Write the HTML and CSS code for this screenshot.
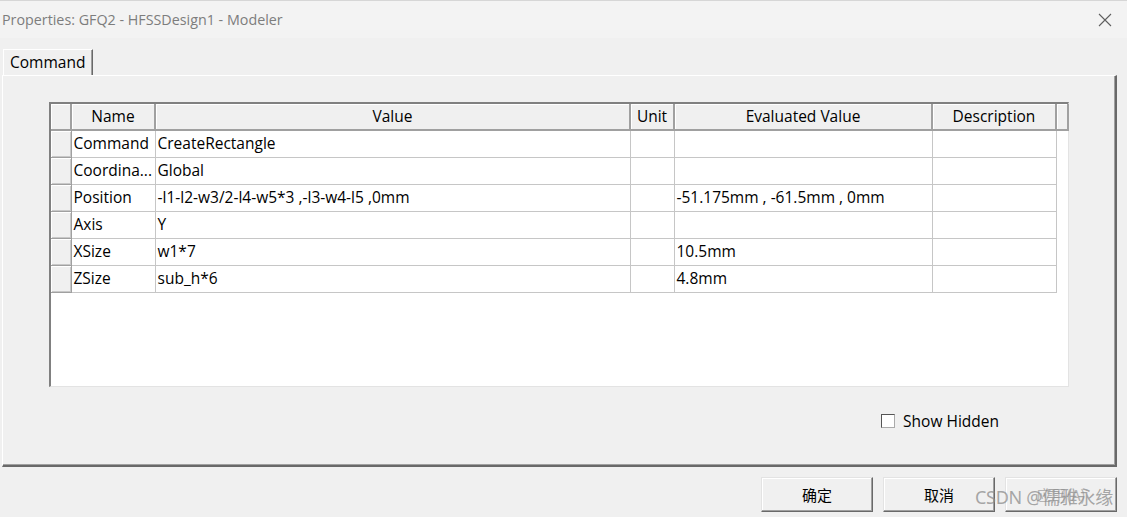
FILE: index.html
```html
<!DOCTYPE html>
<html lang="en">
<head>
    <meta charset="UTF-8">
    <link rel="stylesheet" href="styles.css">
</head>
<body>

<div class="dialog">
    <div class="titlebar">
        <div class="title">Properties: GFQ2 - HFSSDesign1 - Modeler</div>
        <svg class="close" width="14" height="14" viewBox="0 0 14 14">
            <path d="M1 1 L13 13 M13 1 L1 13" stroke="#5f5f5f" stroke-width="1.1" fill="none"/>
        </svg>
    </div>

    <div class="tabs">
        <div class="tab">Command</div>
    </div>

    <div class="panel">
        <div class="grid">
            <table>
                <colgroup>
                    <col class="c-sel">
                    <col class="c-name">
                    <col class="c-value">
                    <col class="c-unit">
                    <col class="c-eval">
                    <col class="c-desc">
                    <col class="c-end">
                </colgroup>
                <thead>
                    <tr>
                        <th></th>
                        <th>Name</th>
                        <th>Value</th>
                        <th>Unit</th>
                        <th>Evaluated Value</th>
                        <th>Description</th>
                        <th></th>
                    </tr>
                </thead>
                <tbody>
                    <tr>
                        <td class="sel"></td><td>Command</td><td>CreateRectangle</td><td></td><td></td><td></td><td class="blank"></td>
                    </tr>
                    <tr>
                        <td class="sel"></td><td>Coordina...</td><td>Global</td><td></td><td></td><td></td><td class="blank"></td>
                    </tr>
                    <tr>
                        <td class="sel"></td><td>Position</td><td>-l1-l2-w3/2-l4-w5*3 ,-l3-w4-l5 ,0mm</td><td></td><td>-51.175mm , -61.5mm , 0mm</td><td></td><td class="blank"></td>
                    </tr>
                    <tr>
                        <td class="sel"></td><td>Axis</td><td>Y</td><td></td><td></td><td></td><td class="blank"></td>
                    </tr>
                    <tr>
                        <td class="sel"></td><td>XSize</td><td>w1*7</td><td></td><td>10.5mm</td><td></td><td class="blank"></td>
                    </tr>
                    <tr>
                        <td class="sel"></td><td>ZSize</td><td>sub_h*6</td><td></td><td>4.8mm</td><td></td><td class="blank"></td>
                    </tr>
                </tbody>
            </table>
        </div>

        <div class="options">
            <label class="check"><span class="box"></span>Show Hidden</label>
        </div>
    </div>

    <div class="buttons">
        <button class="btn">确定</button>
        <button class="btn">取消</button>
        <button class="btn" disabled>应用(A)</button>
    </div>

    <div class="watermark">CSDN @儒雅永缘</div>
</div>

</body>
</html>
```

FILE: styles.css
```css
body {
    margin: 0;
    background: #f0f0f0;
    font-family: "Open Sans", "Noto Sans", "Noto Sans CJK SC", sans-serif;
    font-size: 15.5px;
    color: #000;
}

.dialog {
    position: relative;
    height: 517px;
    overflow: hidden;
}

/* barra de titulo */
.titlebar {
    height: 38px;
    display: flex;
    align-items: center;
    justify-content: space-between;
    padding: 0 15px 0 2px;
    background: #f3f3f3;
    border-top: 1px solid #d6d6d6;
    box-sizing: border-box;
}

.title {
    color: #7d7d7d;
    font-size: 14.3px;
}

.close {
    margin-top: 1px;
}

.tabs {
    display: flex;
    padding: 11px 0 0 3px;
}

.tab {
    height: 26px;
    padding: 0 7px 0 6px;
    line-height: 24px;
    border-top: 1px solid #fff;
    border-left: 1px solid #fff;
    border-right: 1px solid #696969;
    box-shadow: inset -1px 0 #a0a0a0;
    background: #f0f0f0;
    box-sizing: border-box;
}

.panel {
    margin: 0 10px 0 2px;
    height: 392px;
    border-top: 1px solid #fff;
    border-left: 1px solid #fff;
    border-right: 2px solid #696969;
    border-bottom: 2px solid #696969;
    box-shadow: inset -1px -1px #a0a0a0;
    box-sizing: border-box;
    padding: 26px 0 0 46px;
}

/* tabla de propiedades */
.grid {
    width: 1020px;
    height: 285px;
    background: #fff;
    border-top: 2px solid #808080;
    border-left: 2px solid #808080;
    border-right: 1px solid #e3e3e3;
    border-bottom: 1px solid #e3e3e3;
    box-sizing: border-box;
}

table {
    border-collapse: collapse;
    table-layout: fixed;
    width: 1017px;
}

.c-sel { width: 20px; }
.c-name { width: 84px; }
.c-value { width: 475px; }
.c-unit { width: 44px; }
.c-eval { width: 258px; }
.c-desc { width: 124px; }
.c-end { width: 12px; }

th {
    height: 26px;
    padding: 0 0 1px;
    font-weight: normal;
    background: #f0f0f0;
    border-right: 2px solid #a0a0a0;
    border-bottom: 2px solid #a0a0a0;
    box-shadow: inset 1px 1px #fff;
    box-sizing: border-box;
    text-align: center;
}

td {
    height: 24px;
    padding: 0 0 2px 2px;
    border: 1px solid #c6c6c6;
    white-space: nowrap;
    overflow: hidden;
}

td.sel {
    background: #f0f0f0;
    border: 1px solid #a0a0a0;
    border-left: 0;
    box-shadow: inset 1px 1px #fff, inset -1px -1px #c8c8c8;
}

td.blank {
    border: 0;
    border-left: 1px solid #c6c6c6;
}

.options {
    display: flex;
    justify-content: flex-end;
    padding: 23px 116px 0 0;
}

.check {
    display: flex;
    align-items: center;
    gap: 8px;
}

.box {
    width: 12px;
    height: 12px;
    background: #fff;
    border: 1px solid #555;
    border-right-color: #aaa;
    border-bottom-color: #aaa;
}

/* botones */
.buttons {
    display: flex;
    justify-content: flex-end;
    gap: 10px;
    padding: 10px 10px 0 0;
}

.btn {
    width: 112px;
    height: 35px;
    font-family: "Noto Sans CJK SC", sans-serif;
    font-size: 15px;
    color: #000;
    background: #f0f0f0;
    border: 1px solid;
    border-color: #e3e3e3 #696969 #696969 #e3e3e3;
    box-shadow: inset -1px -1px #a0a0a0, inset 1px 1px #fff;
    padding: 0;
}

.btn:disabled {
    color: #b4b4b4;
}

.watermark {
    position: absolute;
    left: 975px;
    top: 483px;
    font-family: "Noto Sans", "Noto Sans CJK SC", sans-serif;
    font-size: 18px;
    color: rgba(140, 140, 140, 0.75);
    letter-spacing: -0.3px;
}
```
